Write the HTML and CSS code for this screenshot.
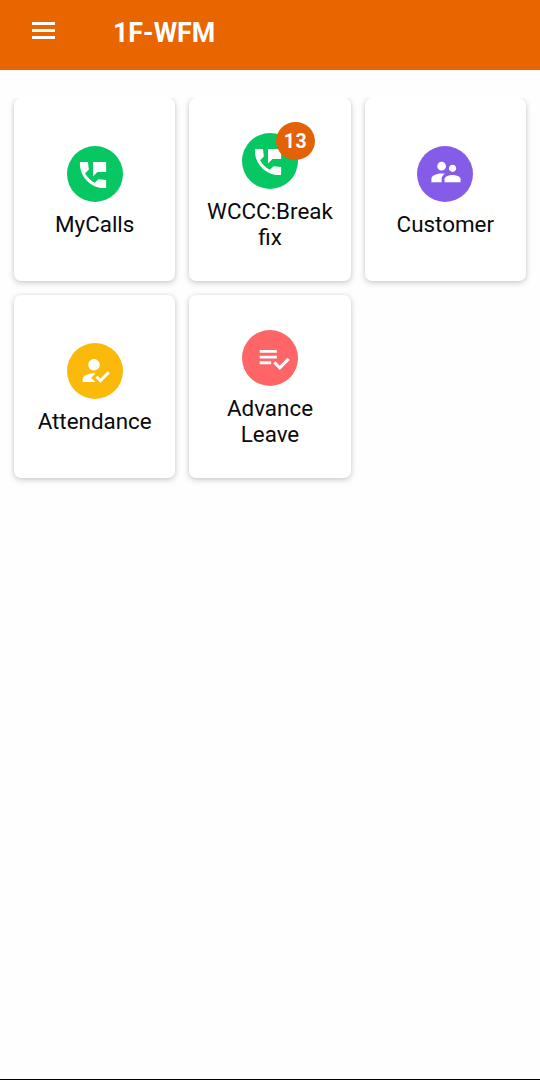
FILE: index.html
```html
<!DOCTYPE html>
<html lang="en">
<head>
  <meta charset="UTF-8" />
  <meta name="viewport" content="width=device-width, initial-scale=1" />
  <title>1F-WFM</title>
  <link rel="stylesheet" href="styles.css">
</head>
<body>

  <!-- Header -->
  <header class="header">
    <button class="menu-btn" aria-label="Menu">
      <span class="bar"></span>
      <span class="bar"></span>
      <span class="bar"></span>
    </button>
    <h1 class="title">1F-WFM</h1>
  </header>

  <!-- Home tiles -->
  <main class="tiles">
    <div class="card">
      <div class="icon green">
        <svg class="phone" viewBox="0 0 24 24"><path d="M21 15.46l-5.27-.61-2.52 2.52c-2.83-1.44-5.15-3.75-6.59-6.59l2.53-2.53L8.54 3H3.03C2.45 13.18 10.82 21.55 21 20.97v-5.51zM12 3v10l3-3h6V3h-9z"/></svg>
      </div>
      <div class="label">MyCalls</div>
    </div>

    <div class="card">
      <div class="icon green">
        <svg class="phone" viewBox="0 0 24 24"><path d="M21 15.46l-5.27-.61-2.52 2.52c-2.83-1.44-5.15-3.75-6.59-6.59l2.53-2.53L8.54 3H3.03C2.45 13.18 10.82 21.55 21 20.97v-5.51zM12 3v10l3-3h6V3h-9z"/></svg>
        <span class="badge">13</span>
      </div>
      <div class="label">WCCC:Break<br>fix</div>
    </div>

    <div class="card">
      <div class="icon purple">
        <svg class="people" viewBox="0 0 24 24"><path d="M16.5 12c1.38 0 2.49-1.12 2.49-2.5S17.88 7 16.5 7C15.12 7 14 8.12 14 9.5s1.12 2.5 2.5 2.5zM9 11c1.66 0 2.99-1.34 2.99-3S10.66 5 9 5C7.34 5 6 6.34 6 8s1.34 3 3 3zm7.5 3c-1.83 0-5.5.92-5.5 2.75V19h11v-2.25c0-1.83-3.67-2.75-5.5-2.75zM9 13c-2.33 0-7 1.17-7 3.5V19h7v-2.25c0-.85.33-2.34 2.37-3.47C10.5 13.1 9.66 13 9 13z"/></svg>
      </div>
      <div class="label">Customer</div>
    </div>

    <div class="card">
      <div class="icon yellow">
        <svg class="person" viewBox="0 0 24 24"><path d="M9 17l3-2.94c-.39-.04-.68-.06-1-.06-2.67 0-8 1.34-8 4v2h9l-3-3zm2-5c2.21 0 4-1.79 4-4s-1.79-4-4-4-4 1.79-4 4 1.79 4 4 4zm4.47 8.5L12 17l1.4-1.41 2.07 2.08 5.13-5.17 1.4 1.41z"/></svg>
      </div>
      <div class="label">Attendance</div>
    </div>

    <div class="card">
      <div class="icon red">
        <svg class="list" viewBox="0 0 24 24"><path d="M14 10H2v2h12v-2zm0-4H2v2h12V6zM2 16h8v-2H2v2zm19.5-4.5L23 13l-6.99 7-4.51-4.5L13 14l3.01 3 5.49-5.5z"/></svg>
      </div>
      <div class="label">Advance<br>Leave</div>
    </div>
  </main>

</body>
</html>
```
FILE: styles.css
```css
* {
  box-sizing: border-box;
}

body {
  margin: 0;
  height: 100vh;
  display: flex;
  flex-direction: column;
  font-family: Roboto, "Liberation Sans", sans-serif;
  background: #fefefe;
  color: #0a0a0a;
  border-bottom: 1px solid #000;
  overflow: hidden;
}

.header {
  display: flex;
  align-items: center;
  height: 70px;
  padding: 0 32px 8px;
  background: #e86500;
}

.menu-btn {
  display: flex;
  flex-direction: column;
  gap: 4px;
  width: 23px;
  margin-top: -1px;
  padding: 0;
  border: none;
  background: none;
}

.bar {
  width: 23px;
  height: 3px;
  background: #fff;
}

.title {
  margin: 3px 0 0 58px;
  font-size: 26.8px;
  line-height: 32px;
  font-weight: 700;
  color: #fff;
}

/* top edge clips the shadow of the first row */
.tiles {
  flex: 1;
  display: grid;
  grid-template-columns: repeat(3, 1fr);
  grid-auto-rows: 183px;
  gap: 14px;
  align-content: start;
  margin-top: 28px;
  padding: 0 14px;
  overflow: hidden;
}

.card {
  display: flex;
  flex-direction: column;
  align-items: center;
  justify-content: center;
  padding-top: 4px;
  background: #fff;
  border-radius: 7px;
  box-shadow: 0 2px 6px rgba(0, 0, 0, 0.19), 0 0 4px rgba(0, 0, 0, 0.06);
}

.icon {
  position: relative;
  display: flex;
  align-items: center;
  justify-content: center;
  width: 56px;
  height: 56px;
  border-radius: 50%;
}

.icon svg {
  width: 35px;
  height: 35px;
  fill: #fff;
}

.green { background: #07c763; }
.purple { background: #855ce8; }
.yellow { background: #fab90b; }
.red { background: #fd6566; }

.phone { transform: translate(-1.5px, 1.5px); }
.people { transform: translate(0.5px, -1.5px); }
.person { transform: translate(1px, 0) scale(0.98); }
.list { transform: translate(4.5px, 1px) scale(0.98); }

.badge {
  position: absolute;
  top: -11px;
  right: -17px;
  width: 39px;
  height: 38px;
  border-radius: 50%;
  background: #e36207;
  color: #fff;
  font-size: 19.5px;
  font-weight: 700;
  line-height: 39px;
  letter-spacing: 0.5px;
  text-align: center;
}

.label {
  margin-top: 9px;
  font-size: 22.4px;
  line-height: 26.5px;
  text-align: center;
}
```
